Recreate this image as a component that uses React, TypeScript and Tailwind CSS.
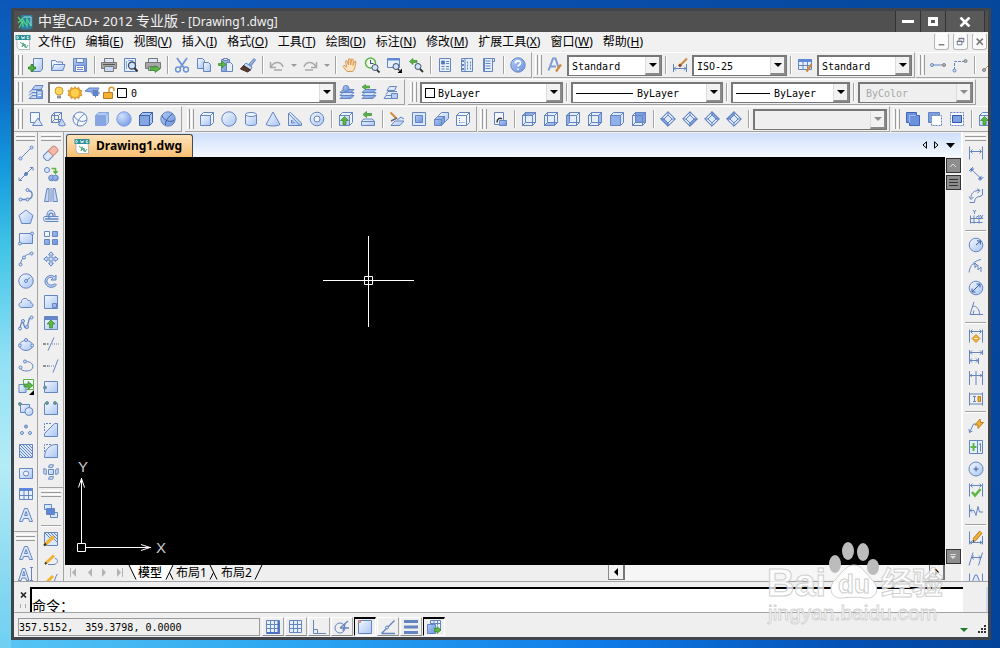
import type { ReactNode } from "react"

const FACE = "url(#face)"
const DEEP = "url(#deep)"
const GREEN = "#5fb446"
const GOLD = "#f2b233"

const dot = (x: number, y: number, fill = "#cfe0fa", r = 1.5) => <circle cx={x} cy={y} r={r} fill={fill} />

const cube = (front: string, side: string) => (
  <>
    <path d="M1.5 4.5l3-3h10v10l-3 3z" fill={side} />
    <path d="M1.5 4.5h10v10h-10z" fill={front} />
    <path d="M11.5 4.5l3-3" />
  </>
)

const viewCube = (face: ReactNode) => (
  <>
    <path d="M1.5 4.5l3-3h10v10l-3 3h-10z" fill="#e4eefc" />
    {face}
    <path d="M1.5 4.5h10v10h-10zM11.5 4.5l3-3M4.5 1.5v10h10M4.5 11.5l-3 3" />
  </>
)

const diamond = (shade: ReactNode) => (
  <>
    <path d="M8 .8L15.2 8 8 15.2.8 8z" fill="#dce9fc" />
    {shade}
    <path d="M8 .8L15.2 8 8 15.2.8 8zM8 4l4 4-4 4-4-4zM8 .8V4M15.2 8H12M8 15.2V12M.8 8H4" />
  </>
)

const layers = (
  <>
    <path d="M1 14.5l3-3h11l-3 3z" fill={DEEP} />
    <path d="M1 11.5l3-3h11l-3 3z" fill="#cfe0fa" />
    <path d="M1 8.5l3-3h11l-3 3z" fill={DEEP} />
  </>
)

const letterA = <path d="M1.5 14.5L6.5 1.5h3l5 13h-3l-1-3h-5l-1 3zM6.5 8.5h3L8 4.5z" fill="#dbe8fb" />

const dimEnds = <path d="M1.5 1.5v13M14.5 1.5v13" />
const arrowsH = (y: number) => <path d={`M2.5 ${y}h11M4.5 ${y - 2}l-2 2 2 2M11.5 ${y - 2}l2 2-2 2`} />

const icons: Record<string, ReactNode> = {
  new: (
    <>
      <path d="M5.5 1.5h9v10.5l-2 2.5h-7z" fill={FACE} />
      <path d="M3 7.5h2v2.5h2.5v2H5v2.5H3V12H.5v-2H3z" fill={GREEN} stroke="#2f8a2a" />
    </>
  ),
  open: (
    <>
      <path d="M1.5 13.5v-10h4L7 5h5.5v3" fill="#eaf2fd" />
      <path d="M1.5 13.5l2.5-6h11l-2 6z" fill={FACE} />
    </>
  ),
  save: (
    <>
      <path d="M1.5 1.5h13v13h-13z" fill={DEEP} />
      <path d="M4.5 1.5h7v4h-7z" fill="#eef4fd" />
      <path d="M3.5 8.5h9v6h-9z" fill="#fff" />
      <path d="M5 10.5h6M5 12.5h6" />
    </>
  ),
  print: (
    <g stroke="#777">
      <path d="M3.5 1.5h9v4h-9z" fill="#dbe8fb" />
      <path d="M.5 5.5h15v6H.5z" fill="#a8a8a8" />
      <path d="M3.5 9.5h9v5h-9z" fill="#c6daf8" />
      <path d="M2 7.5h12" stroke="#555" />
    </g>
  ),
  preview: (
    <>
      <path d="M1.5 1.5h11v13h-11z" fill="#e6effc" />
      <path d="M3.5 4v8M5 3.5h5" stroke="#88a4d8" />
      <circle cx="9" cy="8.5" r="3.5" fill="#cfe2fb" stroke="#3d4c66" strokeWidth="1.3" />
      <path d="M11.5 11l3 3.5" stroke="#333" strokeWidth="2" />
    </>
  ),
  publish: (
    <g stroke="#777">
      <path d="M3.5 1.5h9v4h-9z" fill="#dbe8fb" />
      <path d="M.5 5.5h15v6H.5z" fill="#a8a8a8" />
      <path d="M3.5 9.5h9v4h-9z" fill="#c6daf8" />
      <path d="M5 10.5h5v-2l5 3.5-5 3.5v-2H5z" fill={GREEN} stroke="#2f8a2a" strokeWidth=".7" />
    </g>
  ),
  cut: (
    <g stroke="#6f93d6">
      <path d="M3 1l7 10M13 1L6 11" strokeWidth="1.8" />
      <circle cx="4" cy="12.5" r="2.4" strokeWidth="1.5" />
      <circle cx="12" cy="12.5" r="2.4" strokeWidth="1.5" />
    </g>
  ),
  copy: (
    <>
      <path d="M1.5 1.5h5l2 2v8h-7z" fill={FACE} />
      <path d="M7.5 5.5h5l2 2v7h-7z" fill={FACE} />
    </>
  ),
  paste: (
    <>
      <path d="M3.5 2.5h8v12h-8z" fill={DEEP} />
      <path d="M5.5 1.5h4v2h-4z" fill="#eee" />
      <path d="M8.5 5.5h4l2 2v7h-6z" fill="#e6effc" />
      <path d="M.5 6.5H4V4l4 3.5L4 11V8.500H.5z" fill={GREEN} stroke="#2f8a2a" strokeWidth=".7" />
    </>
  ),
  match: (
    <>
      <path d="M9 7l5-5.5L15.5 3 11 9z" fill={DEEP} />
      <path d="M6 6l6 4-1.500 3-7-4.500z" fill="#c9d6ee" />
      <path d="M3.500 8.500l7 4.500-3 2L.5 12z" fill="#5b3a2c" stroke="#3c2a26" />
    </>
  ),
  undo: <path d="M1.5 5v5.500H7M2 10c3-6 10-6 12 0M5 13h8" stroke="#a9a9a9" strokeWidth="1.5" />,
  redo: <path d="M14.5 5v5.500H9M14 10c-3-6-10-6-12 0M3 13h8" stroke="#a9a9a9" strokeWidth="1.5" />,
  pan: (
    <path
      d="M5 14.500L1 9.500l1-1.300 2.500 1.800L3.500 4l1.300-.5L6.500 8V2l1.500-.5L8.700 8l1-6 1.500.3-.2 6.200 1.800-4.500 1.200.6-1.200 6.400-2 3.500z"
      fill="#fbe3c2"
      stroke="#d99a58"
    />
  ),
  zoomRealtime: (
    <>
      <circle cx="6.500" cy="6" r="5" fill="#f0faf0" stroke={GREEN} strokeWidth="1.5" />
      <path d="M6.500 3v3.500h3" stroke="#3d4c66" />
      <circle cx="11" cy="10.500" r="3" fill="#cfe2fb" stroke="#44536e" />
      <path d="M13 13l2.500 2.500" stroke="#333" strokeWidth="1.800" />
    </>
  ),
  zoomWindow: (
    <>
      <path d="M1.5 1.5h12v9h-12z" fill="#e6effc" />
      <path d="M1.5 2.5h12" strokeWidth="2" stroke="#5f88d8" />
      <circle cx="10" cy="9.5" r="3" fill="#cfe2fb" stroke="#44536e" />
      <path d="M12 12l1.5 1.5" stroke="#333" strokeWidth="1.5" />
      <path d="M16 11.5V16h-4.5z" fill="#000" stroke="none" />
    </>
  ),
  zoomPrev: (
    <>
      <path d="M5 1.5L1.5 4.500 5 7.500v-2h4v-2H5z" fill={GREEN} stroke="#2f8a2a" strokeWidth=".7" />
      <circle cx="10" cy="9.5" r="3" fill="#cfe2fb" stroke="#44536e" />
      <path d="M12 12l3 3" stroke="#333" strokeWidth="1.8" />
    </>
  ),
  properties: (
    <>
      <path d="M2.5 1.5h11v13h-11z" fill="#e6effc" />
      <path d="M4.5 4h3v3h-3z" fill="#4a73c4" />
      <path d="M9 4.5h3M9 6.5h3M4.5 9.5h3M9 9.5h3M4.5 12h3M9 12h3" />
    </>
  ),
  designCenter: (
    <>
      <path d="M2.5 1.5h11v13h-11z" fill="#e6effc" />
      <path d="M6 1.5v13" />
      <path d="M4 3v2M4 7v2M4 11v2M8 5.5h1M11 5.5h1M8 8.5h1M11 8.5h1M8 11.5h1M11 11.5h1" strokeWidth="2" />
    </>
  ),
  toolPalette: (
    <>
      <path d="M2.5 1.5h9v13h-9z" fill="#e6effc" />
      <path d="M11.5 1.5h2v3h-2zM4.5 4h5M4.5 6.5h5M4.5 9h5M4.5 11.5h5" />
      <path d="M3 2v12" strokeWidth="2" />
    </>
  ),
  help: (
    <>
      <circle cx="8" cy="8" r="7.2" fill={DEEP} />
      <path d="M5.5 6.5c0-3.5 5-3.5 5-.5 0 2-2.5 2-2.5 3.5M8 11.5V13" stroke="#fff" strokeWidth="1.7" />
    </>
  ),
  textStyle: (
    <>
      <path d="M1.5 13.5L6 1.5h2.5l3 9M4 9.5h5" strokeWidth="2" stroke="#7d9bd4" />
      <path d="M9 14.5l5-7" stroke="#d08a3c" strokeWidth="2.2" />
    </>
  ),
  dimStyle: (
    <>
      <path d="M1.5 7v8M14.5 7v8M2 11.5h12M4 9.5l-2 2 2 2M12 9.5l2 2-2 2" />
      <path d="M8 8.5l7-7" stroke="#d08a3c" strokeWidth="2.2" />
      <path d="M7 9.5l2-2" stroke="#8a4a30" strokeWidth="3" />
    </>
  ),
  tableStyle: (
    <>
      <path d="M1.5 2.5h13v10h-13z" fill="#e6effc" />
      <path d="M1.5 3.5h13" strokeWidth="3" stroke="#5f88d8" />
      <path d="M1.5 8.5h13M6 4v8.5M10.5 4v8.5" />
      <path d="M9.5 14.5l5-7" stroke="#d08a3c" strokeWidth="2.2" />
    </>
  ),
  dimChainA: (
    <>
      <path d="M2 8h12" />
      {dot(2, 8)}
      {dot(14, 8, GOLD)}
    </>
  ),
  dimChainB: (
    <>
      <path d="M2.5 13V4.5H13" strokeDasharray="3 1" />
      {dot(2.5, 13.5)}
      {dot(13.5, 4, GOLD)}
    </>
  ),
  dimChainC: (
    <>
      <path d="M3 13l10-10" stroke="#d08a3c" />
      {dot(3, 13, GOLD)}
    </>
  ),
  layerManager: (
    <>
      <path d="M1 14.5l3-3h10M1 11.500l3-3h10M1 8.500l3-3h10M4 5.500l3-4h8l-2 4z" fill="#b7cdf3" />
      <path d="M1 14.500h8" />
      <path d="M8.5 6.5h6v8h-6z" fill={DEEP} />
      <path d="M10 9h3M10 11.5h3" stroke="#fff" />
    </>
  ),
  layerCurrent: (
    <>
      {layers}
      <circle cx="7" cy="4.5" r="3" fill={DEEP} />
    </>
  ),
  layerPrev: (
    <>
      {layers}
      <path d="M4.5.5L1 3l3.500 2.500V4h4V2h-4z" fill={GREEN} stroke="#2f8a2a" strokeWidth=".6" />
    </>
  ),
  layerState: (
    <>
      <path d="M1 14.5l2-3h11v3zM3 10.5l2-3h9M4 6.5l2.500-4h7l-2 4z" fill="#dbe8fb" />
      <path d="M8.5 9.5h6v5h-6z" fill="#b7cdf3" />
    </>
  ),
  wire2d: (
    <>
      <path d="M2.5 1.5h9v10h-9z" fill="#f4f8fe" />
      <path d="M10 7l4.500 7.500h-10z" fill="#dbe8fb" />
    </>
  ),
  wire3d: (
    <>
      <path d="M1.5 4.5h7v7h-7zM4.5 1.5h7v7h-7zM1.5 4.5l3-3M8.5 4.5l3-3M1.5 11.5l3-3M8.5 11.5l3-3" />
      <path d="M11.5 7.5l4 6.5c-2 1.200-5 1.200-7 0z" fill="#c3d7f7" />
    </>
  ),
  hidden: (
    <>
      <circle cx="8" cy="8" r="7" fill="#f4f8fe" />
      <path d="M2 4.5C4 10 11 12 14.5 9M12.5 3C9 5 5 10 5.5 14" />
    </>
  ),
  flatShade: <g stroke="#86a6e2">{cube("#86a6e2", "#b5cbf4")}</g>,
  gouraud: <circle cx="8" cy="8" r="7.2" fill="url(#ball)" stroke="#7d9fe0" />,
  flatEdge: <g stroke="#3f62ad">{cube("#86a6e2", "#a9c3f0")}</g>,
  gouraudEdge: (
    <>
      <circle cx="8" cy="8" r="7.200" fill={DEEP} />
      <path d="M2 4.5C4 10 11 12 14.5 9M12.5 3C9 5 5 10 5.5 14" stroke="#3d5c9c" />
    </>
  ),
  box: cube(FACE, "#eef4fd"),
  sphere: <circle cx="8" cy="8" r="7.2" fill={FACE} />,
  cylinder: (
    <>
      <path d="M2.5 3.5V13c1 2 10 2 11 0V3.5" fill={FACE} />
      <ellipse cx="8" cy="3.5" rx="5.5" ry="2" fill="#eef4fd" />
    </>
  ),
  cone: <path d="M8 1l7 12.500c-3 2-11 2-14 0z" fill={FACE} />,
  wedge: (
    <>
      <path d="M1.5 14V2.500l2-1L14.500 12v2.500l-13 0z" fill={FACE} />
      <path d="M1.5 2.500L13 14.500M4.500 9v3h3z" fill="#eef4fd" />
    </>
  ),
  torus: (
    <>
      <circle cx="8" cy="8" r="6.8" fill={FACE} />
      <circle cx="8" cy="8" r="3" fill="#f4f4f4" />
    </>
  ),
  extrude: (
    <>
      {cube(FACE, "#eef4fd")}
      <path d="M6.5 5.5l4 4H8v4H5v-4H2.500z" fill={GREEN} stroke="#2f8a2a" strokeWidth=".7" />
    </>
  ),
  revolve: (
    <>
      <path d="M1.500 10l2.500-2h8l2.500 2v4.500h-13z" fill={FACE} />
      <path d="M1.500 10.500h13" />
      <path d="M6.500.5L3 3.500l3.500 3v-2h5v-2h-5z" fill={GREEN} stroke="#2f8a2a" strokeWidth=".7" />
    </>
  ),
  slice: (
    <>
      <path d="M2 14.500L6 10h9l-4 4.500zM8 9l4-3 3 2" fill={FACE} />
      <path d="M1.500 1.500l6 6" stroke="#d08a3c" strokeWidth="2" />
      <path d="M2 10l6-3" stroke="#667" strokeWidth="1.500" />
    </>
  ),
  section: (
    <>
      <path d="M1.5 1.5h13v13h-13z" fill="#dbe8fb" />
      <path d="M4.5 4.5h7v7h-7z" fill={DEEP} />
    </>
  ),
  interfere: (
    <>
      <path d="M5.5 4.5l3-3h7v6l-3 3h-7z" fill={FACE} />
      <path d="M1.5 8.5l3-3h7v6l-3 3h-7z" fill={DEEP} />
      <path d="M1.5 8.5h7v6M8.500 8.500l3-3" />
    </>
  ),
  setup: (
    <>
      <path d="M1.5 4.5l3-3h10v10l-3 3h-10z" fill="#f4f8fe" />
      <path d="M1.5 4.5h10v10M11.5 4.5l3-3" />
      <path d="M4.5 7v5M4.5 11.5h5" strokeDasharray="1 1" />
    </>
  ),
  namedView: (
    <>
      <path d="M2.5 1.5h9v12h-9z" fill="#f4f8fe" />
      <path d="M7.5 9.5h7v5h-7z" fill={DEEP} />
      <path d="M5 11.5c0-4 3-5 5-3.5" stroke="#333" strokeWidth="1.5" />
    </>
  ),
  viewTop: viewCube(<path d="M1.5 4.5l3-3h10l-3 3z" fill="#8fade6" />),
  viewBottom: viewCube(<path d="M1.5 14.5l3-3h10l-3 3z" fill="#9db9ec" />),
  viewLeft: viewCube(<path d="M1.5 4.5l3-3v10l-3 3z" fill="#8fade6" />),
  viewRight: viewCube(<path d="M11.5 4.5l3-3v10l-3 3z" fill="#9db9ec" />),
  viewFront: cube("#8fb0ea", "#dbe8fb"),
  viewBack: viewCube(<path d="M4.5 1.5h10v10h-10z" fill="#7f9fe0" />),
  isoSW: diamond(<path d="M.8 8H4l4 4v3.2z" fill="#7fa0e0" />),
  isoSE: diamond(<path d="M15.2 8H12l-4 4v3.2z" fill="#7fa0e0" />),
  isoNE: diamond(<path d="M15.2 8H12L8 4V.8z" fill="#7fa0e0" />),
  isoNW: diamond(<path d="M.8 8H4l4-4V.8z" fill="#7fa0e0" />),
  union: (
    <g stroke="#3d66bb">
      <path d="M1.5 1.5h10v3h3v10h-10v-3h-3z" fill="#6c92de" />
      <path d="M4.5 11.5v-7h7" strokeDasharray="1 1" stroke="#cfe0fa" />
    </g>
  ),
  subtract: (
    <>
      <path d="M1.5 1.5h11v3h-8v7h-3z" fill="#7fa0e0" />
      <path d="M4.5 4.5h10v10h-10z" strokeDasharray="2 1" fill="#fff" />
    </>
  ),
  intersect: (
    <>
      <path d="M1.5 1.5h13v13h-13z" strokeDasharray="2 1" fill="#fff" />
      <path d="M3.5 4.5h9v7h-9z" fill="#7fa0e0" stroke="#2f58b0" />
    </>
  ),
  // draw
  line: (
    <>
      <path d="M2.5 13.5l11-11" />
      {dot(2.5, 13.5)}
      {dot(13.5, 2.5)}
    </>
  ),
  xline: (
    <>
      <path d="M1.5 14.5l13-13M1 11.5v3h3M12 1.5h3v3" />
      {dot(8, 8, "#5a80cc")}
    </>
  ),
  polyline: (
    <>
      <path d="M2.5 12.5h7c6-1 6-8 1-9" strokeWidth="1.4" />
      {dot(2.5, 12.5)}
      {dot(9.5, 12.5)}
      {dot(9.5, 3)}
    </>
  ),
  polygon: <path d="M8 1l7 5.500-2.700 8H3.700L1 6.500z" fill={FACE} />,
  rectangle: (
    <>
      <path d="M1.5 3.5h13v10h-13z" fill={FACE} />
      {dot(2, 13.5)}
      {dot(14, 3.5)}
    </>
  ),
  arc: (
    <>
      <path d="M2.5 13.5C3 7 8 3 13.5 2.5" />
      {dot(2.5, 13.5)}
      {dot(6, 6.5)}
      {dot(13.5, 2.5)}
    </>
  ),
  circle: (
    <>
      <circle cx="8" cy="8" r="7.2" fill={FACE} />
      <path d="M8 8l4-3.5" />
      {dot(8, 8)}
    </>
  ),
  cloud: <path d="M4 13.5c-4 0-4-5-.5-5C3 4 9 3 10 6.500c3-.5 3 1.500 2.500 2.500 3.500 0 3 4.500 0 4.500z" fill={FACE} />,
  spline: (
    <>
      <path d="M2 14c1-8 3-8 4-4s3 4 4-1 1-6 4-7" strokeWidth="1.3" />
      {dot(2, 13.5)}
      {dot(5, 6)}
      {dot(9, 12)}
      {dot(13.5, 2.5)}
    </>
  ),
  ellipse: (
    <>
      <ellipse cx="8" cy="8.5" rx="6.5" ry="5" fill={FACE} />
      {dot(8, 3)}
      {dot(1.8, 8.5)}
      {dot(14.2, 8.5)}
    </>
  ),
  ellipseArc: (
    <>
      <path d="M8 3.5c9 0 9 9.5 1 9.500-4 0-6-1-6.500-2.500" />
      {dot(7, 3.5)}
      {dot(2.5, 9.5)}
    </>
  ),
  insert: (
    <>
      <path d="M5.5.5h10v10h-10z" fill="#f4f8fe" stroke={GREEN} />
      <path d="M1 5.5h7v8H1z" fill={FACE} />
      <path d="M6 5h4V2.500l5 4-5 4V8H6z" fill={GREEN} stroke="#2f8a2a" strokeWidth=".7" />
      <path d="M16 11v5h-5z" fill="#000" stroke="none" />
    </>
  ),
  block: (
    <>
      <path d="M2.5 3.5h9v8h-9z" fill={FACE} />
      <circle cx="11" cy="10.5" r="4" fill={FACE} />
      {dot(2, 3, GREEN)}
    </>
  ),
  point: (
    <>
      {dot(8, 4.5, "#8fb0ea")}
      {dot(4, 11)}
      {dot(12, 11)}
    </>
  ),
  hatch: (
    <>
      <path d="M1.5 1.5h13v13h-13z" fill="#dbe8fb" />
      <path d="M2 2l12 12M2 5l9 9M2 8l6 6M2 11l3 3M5 2l9 9M8 2l6 6M11 2l3 3" />
    </>
  ),
  region: (
    <>
      <path d="M1.5 3.5h13v10h-13z" fill={FACE} />
      <circle cx="8" cy="8.5" r="2.5" fill="#f4f8fe" />
    </>
  ),
  table: (
    <>
      <path d="M1.5 2.5h13v11h-13z" fill="#e6effc" />
      <path d="M1.5 3.5h13" strokeWidth="3" stroke="#5f88d8" />
      <path d="M1.5 9.5h13M6 5v8.5M10.5 5v8.5" />
    </>
  ),
  mtext: letterA,
  text: letterA,
  textEdit: (
    <>
      <path d="M.5 14.5l4-12H7l4 12H8.500l-.8-2.500H4l-1 2.500zM4.500 9.500H7l-1.200-4z" fill="#dbe8fb" />
      <path d="M12 1.5h3M12 14.5h3M13.5 1.5v13" />
    </>
  ),
  // modify
  erase: (
    <g transform="rotate(-45 8 8)">
      <rect x="-.5" y="4.5" width="9" height="7" rx="2" fill="#dbe8fb" />
      <path d="M7.5 4.5h6a2 2 0 0 1 2 2v3a2 2 0 0 1-2 2h-6z" fill="#f6b9a8" stroke="#c98a7d" />
    </g>
  ),
  copyObj: (
    <>
      <circle cx="4" cy="4" r="2.5" fill="#dbe8fb" />
      <circle cx="8.5" cy="12" r="2.8" fill={DEEP} />
      <circle cx="12.5" cy="12" r="2.8" fill={DEEP} />
      <path d="M8.5 2.5h4V7M10.5 5l2 2.500 2-2.500" stroke={GREEN} strokeWidth="1.5" />
    </>
  ),
  mirror: (
    <>
      <path d="M4 1.5h2v13H1.5zM12 1.5h-2v13h4.500z" fill="#c3d7f7" />
      <path d="M8 1v14" />
    </>
  ),
  offset: (
    <>
      <path d="M4 7.500V5c1-5 7-5 8 0v2.500M15.500 7.500h-14c-2 1-1 5 1 5h13" fill="#dbe8fb" />
      <path d="M6 10V6c0-2.500 4-2.500 4 0v1.500M15.500 10H2" strokeWidth="1.400" />
    </>
  ),
  array: (
    <>
      <path d="M1.5 1.500h5v5h-5z" fill="#f4f8fe" />
      <path d="M9.500 1.500h5v5h-5zM1.500 9.500h5v5h-5zM9.500 9.500h5v5h-5z" fill={DEEP} />
    </>
  ),
  move: (
    <path
      d="M8 .8l2.500 3H9v3.200h3.200V5.500l3 2.500-3 2.500V9H9v3.200h1.500L8 15.200l-2.500-3H7V9H3.800v1.500L.8 8l3-2.500V7H7V3.800H5.500z"
      fill="#cfe0fa"
    />
  ),
  rotate: (
    <path d="M13 2v5H8l1.800-1.800C6 3 3.500 6 4 9c1 3.500 6 4 8 1.500l1.500 1.500c-4 4.500-11 2-11.500-3C1.500 3.500 8 .5 11.300 3.700z" fill="#b9cff5" />
  ),
  scale: (
    <>
      <path d="M1.5 1.5h13v13h-13z" fill={FACE} />
      <path d="M9.5 9.5h4v4h-4z" fill="#9db9ec" />
    </>
  ),
  stretch: (
    <>
      <path d="M1.5 1.5h13v13h-13z" fill={FACE} />
      <path d="M1.5 2.5h13v2h-13z" fill="#5f88d8" />
      <path d="M8 5l4 4H9.500v4h-3V9H4z" fill={GREEN} stroke="#2f8a2a" strokeWidth=".7" />
    </>
  ),
  trim: (
    <>
      <path d="M5 14.5l6-13" />
      <path d="M0 8h5.5" stroke="#333" strokeDasharray="3 1" />
      <path d="M9 8h7" strokeDasharray="1 1" />
    </>
  ),
  extend: (
    <>
      <path d="M10 14.5l5-13" />
      <path d="M0 8h5.5" stroke="#333" strokeDasharray="3 1" />
      <path d="M6 8h5" strokeDasharray="1 1" />
    </>
  ),
  breakPoint: (
    <>
      <path d="M1.5 2.5h13v11h-13z" fill={FACE} />
      {dot(2, 8.5, GREEN)}
    </>
  ),
  breakTwo: (
    <>
      <path d="M4 3.5H1.5v11h13v-11H12" fill={FACE} />
      {dot(4, 3, GREEN)}
      {dot(12, 3, GREEN)}
    </>
  ),
  chamfer: (
    <>
      <path d="M1.5 11.5l10-10h3v13h-13z" fill={FACE} />
      <path d="M1.5 9V1.5H9" strokeDasharray="2 1" />
    </>
  ),
  fillet: (
    <>
      <path d="M1.5 14.5c0-8 5-12 10-13h3v13z" fill={FACE} />
      <path d="M1.5 9V1.5H9" strokeDasharray="2 1" />
    </>
  ),
  explode: (
    <>
      <path d="M5.5 5.5h5v5h-5z" fill={FACE} />
      <path d="M6.5.8h4l-1 2.500h-4zM6.500 12.700h4l-1 2.500h-4zM.8 4.500l2.500 1v5l-2.500-1zM15.200 4.500l-2.500 1v5l2.500-1z" fill="#dbe8fb" />
    </>
  ),
  order: (
    <>
      <path d="M1.5 1.5h7v5h-7z" fill="#dbe8fb" />
      <path d="M7.5 9.5h7v5h-7z" fill="#dbe8fb" />
      <path d="M3.5 5.5h8v6h-8z" fill="#5d86d8" />
    </>
  ),
  hatchEdit: (
    <>
      <path d="M1.5 1.5h13v13h-13z" fill="#dbe8fb" />
      <path d="M5 2l9 9M8 2l6 6M11 2l3 3M2 2l5 5" />
      <path d="M2 13.5l9-8" stroke={GOLD} strokeWidth="3.5" />
      <path d="M1 14.5l2-2" stroke="#333" strokeWidth="2" />
    </>
  ),
  pedit: (
    <>
      <path d="M5 13.5h6c5-1 4-6 1-6" />
      <path d="M3 12l8-7.500" stroke={GOLD} strokeWidth="3" />
      <path d="M2 13l1.500-1.500" stroke="#333" strokeWidth="2" />
    </>
  ),
  splinedit: (
    <>
      <path d="M9 14c3-2 3-9 5.500-11" />
      <path d="M3 12l7-7" stroke={GOLD} strokeWidth="3" />
      <path d="M2 13l1.500-1.500" stroke="#333" strokeWidth="2" />
    </>
  ),
  // dimension
  dimLinear: (
    <>
      {dimEnds}
      {arrowsH(6.5)}
    </>
  ),
  dimAligned: (
    <>
      <path d="M3.5 3.500l9.500 9M1 5l4-4M11.500 15l4-4" />
      <path d="M2.500 2.500h4l-4 4zM13.500 13.500h-4l4-4z" fill="#5a80cc" stroke="none" />
    </>
  ),
  dimArc: <path d="M3 10c0-5 3-7.500 8-7.500M1 8.500l2 3 2.500-2.500M9 .8l3 1.700-2.500 2.700M1.500 14.500h5c0-4 2-6 6-6M14.500 1v6l-3 1.500" />,
  dimOrdinate: <path d="M2.500 6.500v8M2.500 9.500h12M2.500 13.500h12M6 6.500v8M11 6.500v8M5 1l1.500 2L8 1M6.500 3v2M12 6l3 4M15 6l-3 4M8 8.500l3-2" />,
  dimRadius: (
    <>
      <circle cx="8" cy="8" r="6.8" fill={FACE} />
      <path d="M8 8l4.500-4M9 3.800l3.500.2-.2 3.500" stroke="#3d5c9c" />
    </>
  ),
  dimJogged: <path d="M1 14.500C2 7 6 3 13 1.500M7 5v5M5.500 7L7 5l2 2M7 9l3-2v5l3-3v5" />,
  dimDiameter: (
    <>
      <circle cx="8" cy="8" r="6.8" fill={FACE} />
      <path d="M4 12l8-8M8.500 4H12v3.500M4 8.500V12h3.500" stroke="#3d5c9c" />
    </>
  ),
  dimAngular: <path d="M6 .8L2 13.500h13M5 5c4 0 6.500 4 6.500 8M5 13.500l1-4" />,
  dimQuick: (
    <>
      {dimEnds}
      {arrowsH(3.5)}
      <path d="M8 6.500l4 4-4 4-4-4z" fill={GOLD} stroke="#d08a3c" />
      <path d="M6.500 10.500h3" stroke="#fff" />
    </>
  ),
  dimBaseline: <path d="M1.500 1v14M14.500 1v5M10.500 9v6M2 3.500h12M4 1.500l-2 2 2 2M12 1.500l2 2-2 2M2 11.500h8M4 9.500l-2 2 2 2M8 9.500l2 2-2 2" />,
  dimContinue: <path d="M1.500 1v14M8 1v14M14.500 1v14M2 5.500h12M4 4.500l-2 1 2 1M12 4.500l2 1-2 1" />,
  dimSpace: (
    <>
      {dimEnds}
      <path d="M2 3h12M2 13h12M5 5.500h3M6.500 5.500v5M5 10.500h3" />
      <path d="M10 5.500h2.500v5H10z" fill={GOLD} stroke="#c07a1e" />
    </>
  ),
  leader: (
    <>
      <path d="M1.500 14.500L5.500 6H8M1 11l.5 3.500L4.500 13" />
      <path d="M7 7l5-6 .5 3.500h3L10 10.500V7z" fill={GOLD} stroke="#c07a1e" />
    </>
  ),
  tolerance: (
    <>
      <path d="M1.5 1.5h13v13h-13zM9.500 1.500v13" fill="#e6effc" />
      <path d="M5.5 4v8M2.500 8h6" stroke={GREEN} strokeWidth="2" />
      <path d="M11 5.500l1.500-1v8" />
    </>
  ),
  centerMark: (
    <>
      <circle cx="8" cy="8" r="7" fill={FACE} />
      <path d="M8 5.5v5M5.5 8h5" stroke="#3d5c9c" />
    </>
  ),
  inspect: (
    <>
      {dimEnds}
      {arrowsH(3.5)}
      <path d="M4 10l3 3.500L12.500 7" stroke={GREEN} strokeWidth="2.5" />
    </>
  ),
  joggedLinear: <path d="M1.500 1.500v13M2 7.500h4l2 5 2-9 1.500 5.500H15M4 5.500l-2 2 2 2" />,
  dimEdit: (
    <>
      <path d="M1.500 1.500v13M14.500 6v8.500M2 12.500h12M4 11l-2 1.500L4 14M12 11l2 1.500-2 1.500" />
      <path d="M6 10l7-8" stroke="#a87a2a" strokeWidth="4" />
      <path d="M6 10l7-8" stroke={GOLD} strokeWidth="2.600" />
      <path d="M5 11.500l1-1" stroke="#333" strokeWidth="2" />
    </>
  ),
  dimOblique: <path d="M1 14.500L5 1.500M10.500 14.500l4-13M4 6.500h9M5.500 4.500l-1.500 2 1.500 2M11 4.500l2 2-2 2" />,
  dimTextEdit: (
    <>
      {dimEnds}
      <path d="M3.500 12l3.500-9h2l3.500 9h-2l-.8-2H6.300l-.8 2z" fill="#dbe8fb" />
    </>
  ),
  // status bar
  snap: (
    <>
      <path d="M1.5 1.5h13v13h-13z" fill="#e6effc" />
      <path d="M1.5 5.5h13M1.5 9.5h13M5.5 1.5v13M9.5 1.5v13" />
      <path d="M13.5 2v12H2" strokeWidth="2" stroke="#4a70c0" />
    </>
  ),
  grid: <path d="M1.5 1.5h12v12h-12zM1.5 5.5h12M1.5 9.5h12M5.5 1.5v12M9.5 1.5v12" fill="#e6effc" />,
  ortho: <path d="M2.5 1v13.5H15M2.5 10.5h4v4" />,
  polar: (
    <>
      <circle cx="6" cy="9" r="5" />
      <path d="M6 9l8-7M6 9h9M11 5l-2 7" strokeWidth="1.3" />
    </>
  ),
  osnap: (
    <>
      <path d="M1.5 1.5h13v13h-13z" fill={FACE} />
      <path d="M1.500 1.500h2v2h-2z" fill="#e9a79c" stroke="#c98a7d" />
    </>
  ),
  otrack: (
    <>
      <path d="M1.5 14.5l13-13M1.5 14.5H15" strokeWidth="1.4" />
      {dot(7, 8.5)}
    </>
  ),
  lineweight: <path d="M1 2.500h14M1 8h14M1 13.500h14" strokeWidth="3" />,
  dynamic: (
    <>
      <path d="M4.5 1.5h10v10h-10zM4.5 4.5h10M8 1.5v5M11.5 1.5v5" fill="#e6effc" />
      <path d="M1.500 5.500h8v9h-8z" fill={DEEP} />
      <path d="M8.500 9.500H11V7.500l4 3.500-4 3.500v-2H8.500z" fill={GREEN} stroke="#2f8a2a" strokeWidth=".7" />
    </>
  ),
}

function Icon({ name }: { name: string }) {
  return (
    <svg viewBox="0 0 16 16" className="size-4 shrink-0" fill="none" stroke="#6585c0" strokeWidth="1" aria-hidden="true">
      {icons[name]}
    </svg>
  )
}

function ToolButton({ name }: { name: string }) {
  return (
    <button type="button" aria-label={name} className="flex w-[22px] shrink-0 items-center justify-center hover:bg-[#dfe8f6]">
      <Icon name={name} />
    </button>
  )
}

function Tools({ names }: { names: string }) {
  return names.split(" ").map((name) => <ToolButton key={name} name={name} />)
}

function Sep() {
  return (
    <div className="flex w-[7px] shrink-0 justify-center py-[3px]">
      <div className="w-[2px] border-r border-l border-r-white border-l-[#a3a3a3]" />
    </div>
  )
}

function Grip() {
  return (
    <div className="flex w-[11px] shrink-0 gap-px py-[2px] pl-[2px]">
      <div className="w-[3px] border-r border-l border-r-[#9a9a9a] border-l-white" />
      <div className="w-[3px] border-r border-l border-r-[#9a9a9a] border-l-white" />
    </div>
  )
}

function Bar({ children, className = "mr-px" }: { children: ReactNode; className?: string }) {
  return (
    <div className={`flex shrink-0 border-t border-r border-b border-t-white border-r-[#a3a3a3] border-b-[#a3a3a3] pr-[2px] ${className}`}>
      <Grip />
      {children}
    </div>
  )
}

type ComboProps = { label: string; value: string; width: string; pad?: string; disabled?: boolean; children?: ReactNode }

function Combo({ label, value, width, pad = "pl-[3px]", disabled, children }: ComboProps) {
  return (
    <div
      className={`relative my-[2px] ml-px h-[21px] shrink-0 border-t-2 border-r border-b border-l-2 border-[#777] ${width} ${
        disabled ? "bg-[#efefef]" : "bg-white"
      }`}
    >
      <select
        aria-label={label}
        disabled={disabled}
        className={`block size-full appearance-none bg-transparent font-['DejaVu_Sans_Mono',monospace] text-[10px] outline-none disabled:text-[#a8a8a8] ${pad}`}
      >
        <option>{value}</option>
      </select>
      <div className="pointer-events-none absolute inset-y-0 left-0 flex items-center">{children}</div>
      <div className="pointer-events-none absolute inset-y-0 right-0 flex w-4 items-center justify-center border-r-2 border-b-2 border-l border-r-[#8a8a8a] border-b-[#8a8a8a] border-l-[#ddd] bg-[#f2f2f2]">
        <svg viewBox="0 0 8 4" className="h-1 w-2" fill={disabled ? "#8d8d8d" : "#000"}>
          <path d="M0 0h8L4 4z" />
        </svg>
      </div>
    </div>
  )
}

function HGrip() {
  return (
    <div className="flex h-[10px] shrink-0 flex-col gap-px px-[2px] pt-[2px]">
      <div className="h-[3px] border-t border-b border-t-white border-b-[#9a9a9a]" />
      <div className="h-[3px] border-t border-b border-t-white border-b-[#9a9a9a]" />
    </div>
  )
}

function HSep() {
  return <div className="mx-[2px] my-[2px] h-[2px] shrink-0 border-t border-b border-t-[#a3a3a3] border-b-white" />
}

function Stack({ names, height }: { names: string; height: string }) {
  return (
    <div className={`flex shrink-0 flex-col items-center ${height}`}>
      {names.split(" ").map((name) => (
        <button key={name} type="button" aria-label={name} className="flex w-[22px] flex-1 items-center justify-center">
          <Icon name={name} />
        </button>
      ))}
    </div>
  )
}

function DwgIcon() {
  return (
    <svg viewBox="0 0 16 16" className="size-4 shrink-0" aria-hidden="true">
      <path d="M2 5h11l1.5 2v8.500H4L2 13z" fill="#fff" stroke="#8a9aa0" strokeWidth=".6" />
      <path d="M.5 1h15v5H.5z" fill="#2a8f96" />
      <path d="M2 2.300v2.500c2 0 2-2.500 0-2.500M6.500 2.300l.8 2.500.8-1.800.8 1.800.8-2.500M13.800 2.500h-1.600v2.200h1.600v-1" fill="none" stroke="#fff" strokeWidth=".8" />
      <path d="M5 8.500l3 1.500-1 3 3-3 1 4 2-3M8 8.500l2 5" fill="none" stroke="#3f9f72" strokeWidth=".9" />
    </svg>
  )
}

const menus = [
  ["文件", "F"],
  ["编辑", "E"],
  ["视图", "V"],
  ["插入", "I"],
  ["格式", "O"],
  ["工具", "T"],
  ["绘图", "D"],
  ["标注", "N"],
  ["修改", "M"],
  ["扩展工具", "X"],
  ["窗口", "W"],
  ["帮助", "H"],
]

function TitleBar() {
  return (
    <header className="flex h-[21px] shrink-0 items-center bg-[#505050] pl-[3px] text-[#f2f2f2]">
      <svg viewBox="0 0 16 16" className="size-4 shrink-0" aria-hidden="true">
        <path d="M4 1h11.500v13L13 15.500H4z" fill="#2c7f9e" />
        <path d="M1 3l4 5-3 6M1 9l6-6M6 13V6l4 6V5l4 7" fill="none" stroke="#4fd08a" strokeWidth="1.300" />
        <path d="M7 3h7v9" fill="none" stroke="#9fdcf0" />
      </svg>
      <h1 className="ml-[5px] flex-1 truncate text-[12px] leading-[20px]">
        <span className="text-[14px]">中望</span>
        <span className="text-[13px]">CAD+ 2012 </span>
        <span className="text-[14px]">专业版</span> - [Drawing1.dwg]
      </h1>
      <div className="flex h-full items-stretch border-l border-[#333]">
        <button type="button" aria-label="最小化" className="flex w-[25px] items-center justify-center border-r border-[#333] bg-[#595959]">
          <span className="h-[3px] w-3 bg-white" />
        </button>
        <button type="button" aria-label="最大化" className="flex w-[25px] items-center justify-center border-r border-[#333] bg-[#595959]">
          <span className="h-[9px] w-[10px] border-[3px] border-white" />
        </button>
        <button type="button" aria-label="关闭" className="mr-[3px] flex w-[39px] items-center justify-center border-r border-[#333] bg-[#595959]">
          <svg viewBox="0 0 12 10" className="h-[10px] w-3" stroke="#fff" strokeWidth="2.600">
            <path d="M1.500.5l9 9M10.500.5l-9 9" />
          </svg>
        </button>
      </div>
    </header>
  )
}

function MenuBar() {
  return (
    <nav className="flex h-[19px] shrink-0 items-center bg-[#f1f1f1] pr-px pl-px">
      <DwgIcon />
      <div className="ml-[2px] flex flex-1 overflow-hidden">
        {menus.map(([name, key]) => (
          <button key={key} type="button" className="shrink-0 px-[5px] text-[12px] leading-[18px] whitespace-nowrap">
            {name}(<u>{key}</u>)
          </button>
        ))}
      </div>
      <div className="flex shrink-0 gap-1">
        <button type="button" aria-label="最小化文档" className="h-[17px] w-[15px] rounded-[3px] border border-[#b5b5b5] border-t-white bg-[#fbfbfb]">
          <svg viewBox="0 0 14 14" fill="none" stroke="#777" strokeWidth="1.500">
            <path d="M4 10.500h6" />
          </svg>
        </button>
        <button type="button" aria-label="还原文档" className="h-[17px] w-[15px] rounded-[3px] border border-[#b5b5b5] border-t-white bg-[#fbfbfb]">
          <svg viewBox="0 0 14 14" fill="none" stroke="#6b7686">
            <path d="M5.500 6V3.500h5v4H8.500M5 4h6M3.500 6.500h5v4h-5zM3 7h6" />
          </svg>
        </button>
        <button type="button" aria-label="关闭文档" className="h-[17px] w-[15px] rounded-[3px] border border-[#b5b5b5] border-t-white bg-[#fbfbfb]">
          <svg viewBox="0 0 14 14" fill="none" stroke="#777" strokeWidth="1.800">
            <path d="M4 4l6.500 6.500M10.500 4L4 10.500" />
          </svg>
        </button>
      </div>
    </nav>
  )
}

function DropCaret() {
  return (
    <button type="button" aria-label="历史" className="flex w-[11px] shrink-0 items-center justify-center">
      <svg viewBox="0 0 6 3" className="h-[3px] w-[6px]" fill="#9a9a9a">
        <path d="M0 0h6L3 3z" />
      </svg>
    </button>
  )
}

function ToolRows() {
  return (
    <div className="shrink-0">
      <div className="flex h-[27px] overflow-hidden pt-px">
        <Bar>
          <Tools names="new open save" />
          <Sep />
          <Tools names="print preview publish" />
          <Sep />
          <Tools names="cut copy paste match" />
          <Sep />
          <Tools names="undo" />
          <DropCaret />
          <Tools names="redo" />
          <DropCaret />
          <Sep />
          <Tools names="pan zoomRealtime zoomWindow zoomPrev" />
          <Sep />
          <Tools names="properties designCenter toolPalette" />
          <Sep />
          <Tools names="help" />
        </Bar>
        <Bar>
          <Tools names="textStyle" />
          <Combo label="文字样式" value="Standard" width="w-[95px]" />
          <Sep />
          <Tools names="dimStyle" />
          <Combo label="标注样式" value="ISO-25" width="w-[95px]" />
          <Sep />
          <Tools names="tableStyle" />
          <Combo label="表格样式" value="Standard" width="w-[95px]" />
        </Bar>
        <Bar>
          <Tools names="dimChainA dimChainB" />
          <Sep />
          <Tools names="dimChainC" />
        </Bar>
      </div>
      <div className="flex h-[27px] overflow-hidden pt-px">
        <Bar className="mr-[3px]">
          <Tools names="layerManager" />
          <Combo label="图层" value="0" width="w-[288px]" pad="pl-[81px]">
            <svg viewBox="0 0 76 16" className="ml-[2px] h-4 w-[76px]" fill="none">
              <circle cx="7" cy="6" r="4" fill="#ffd75a" stroke="#d89a2a" />
              <path d="M5 10.500h4v3H5z" fill="#8c96a8" />
              <path d="M23 1.500l1.500 2 2.500-1 .5 2.500 2.500.5L29 8l1 2.500-2.500.5-.5 2.500-2.500-1L23 14.500l-1.500-2-2.500 1-.5-2.500-2.500-.5L17 8l-1-2.500 2.500-.5.5-2.500 2.500 1z" fill="#f0a92e" stroke="#c9821f" strokeWidth=".7" />
              <circle cx="23" cy="8" r="4" fill="#ffd04f" />
              <path d="M33 6l4-3h10l-1.500 2.500H41L39 7z" fill="#8fb0ea" stroke="#5f80bd" />
              <path d="M41 5.500h5v5h-5zM39 8h9M43.500 10v2.500" fill="#5d86d8" stroke="#5f80bd" />
              <path d="M57 8V4.500c0-3 5-3 5 0V6" stroke="#d89a2a" strokeWidth="1.500" />
              <path d="M51.500 7.500h9v6h-9z" fill="#f2b233" stroke="#b97a1c" />
              <path d="M65.500 3.500h9v9h-9z" fill="#fff" stroke="#000" />
            </svg>
          </Combo>
          <Tools names="layerCurrent layerPrev layerState" />
        </Bar>
        <Bar>
          <Combo label="颜色" value="ByLayer" width="w-[143px]" pad="pl-[16px]">
            <span className="ml-[3px] size-[10px] border border-black" />
          </Combo>
          <Sep />
          <Combo label="线型" value="ByLayer" width="w-[152px]" pad="pl-[64px]">
            <span className="ml-[3px] h-px w-[57px] bg-black" />
          </Combo>
          <Sep />
          <Combo label="线宽" value="ByLayer" width="w-[119px]" pad="pl-[41px]">
            <span className="ml-[3px] h-px w-[34px] bg-black" />
          </Combo>
          <Sep />
          <Combo label="打印样式" value="ByColor" width="w-[115px]" pad="pl-[6px]" disabled />
        </Bar>
      </div>
      <div className="flex h-[27px] overflow-hidden pt-px">
        <Bar className="mr-[3px]">
          <Tools names="wire2d wire3d hidden flatShade gouraud flatEdge gouraudEdge" />
        </Bar>
        <Bar>
          <Tools names="box sphere cylinder cone wedge torus" />
          <Sep />
          <Tools names="extrude revolve" />
          <Sep />
          <Tools names="slice section interfere setup" />
        </Bar>
        <Bar>
          <Tools names="namedView" />
          <Sep />
          <Tools names="viewTop viewBottom viewLeft viewRight viewFront viewBack" />
          <Sep />
          <Tools names="isoSW isoSE isoNE isoNW" />
          <Sep />
          <Combo label="视图" value="" width="w-[134px]" disabled />
        </Bar>
        <Bar>
          <Tools names="union subtract intersect" />
          <Sep />
          <Tools names="extrude" />
        </Bar>
      </div>
    </div>
  )
}

function DrawingTabs() {
  return (
    <div className="flex h-6 shrink-0 items-end bg-linear-to-b from-[#cfe0fb] to-[#f6f9ff] pl-px">
      <button
        type="button"
        className="flex h-[23px] items-center gap-[6px] rounded-t-[3px] border border-b-0 border-[#4a4a4a] bg-linear-to-b from-[#fde3b8] to-[#f8bf72] pr-[10px] pl-[7px] text-[12px] font-bold"
      >
        <DwgIcon />
        Drawing1.dwg
      </button>
      <div className="ml-auto flex items-center gap-[7px] self-center pr-[6px]">
        <svg viewBox="0 0 5 8" className="h-2 w-[5px]" fill="none" stroke="#000">
          <path d="M4.500.8v6.400L1 4z" />
        </svg>
        <svg viewBox="0 0 5 8" className="h-2 w-[5px]" fill="none" stroke="#000">
          <path d="M.5.8v6.400L4 4z" />
        </svg>
        <svg viewBox="0 0 9 5" className="h-[5px] w-[9px]">
          <path d="M0 0h9L4.500 5z" />
        </svg>
      </div>
    </div>
  )
}

function ModelSpace() {
  return (
    <main className="relative min-w-0 flex-1 overflow-hidden bg-black">
      <svg viewBox="0 0 91 91" className="absolute top-[79px] left-[258px] size-[91px]" fill="none" stroke="#fff">
        <path d="M45.500 0v91M0 44.500h91M41.500 40.500h8v8h-8z" />
      </svg>
      <svg viewBox="0 0 97 98" className="absolute bottom-[9px] left-2 h-[98px] w-[97px]" fill="none" stroke="#fff">
        <path d="M4.500 85.500h8v8h-8zM8.500 85V20M5.500 29.500l3-9 3 9M13 89.500h65M68 86.500l9 3-9 3" />
        <g fill="#ccc" stroke="none" fontFamily="'Liberation Sans', sans-serif" fontSize="15">
          <text x="5" y="14">Y</text>
          <text x="83" y="95">X</text>
        </g>
      </svg>
    </main>
  )
}

function VerticalScroll() {
  return (
    <div className="flex w-4 shrink-0 flex-col items-center bg-[#efefef] py-px">
      <button type="button" aria-label="向上滚动" className="flex size-[15px] items-center justify-center border border-[#333] bg-[#8e8e8e]">
        <svg viewBox="0 0 8 5" className="h-[5px] w-2" fill="none" stroke="#ddd">
          <path d="M1 4l3-3 3 3" />
        </svg>
      </button>
      <div className="mt-[2px] flex h-[15px] w-[15px] flex-col justify-center gap-[2px] border border-[#333] bg-[#8e8e8e] px-[2px]">
        <div className="h-px bg-[#333]" />
        <div className="h-px bg-[#333]" />
        <div className="h-px bg-[#333]" />
      </div>
      <button type="button" aria-label="向下滚动" className="mt-auto flex size-[15px] items-center justify-center border border-[#333] bg-[#8e8e8e]">
        <svg viewBox="0 0 8 6" className="h-[6px] w-2" fill="#ddd">
          <path d="M1 0h6v1H1zM1 2h6L4 5z" />
        </svg>
      </button>
    </div>
  )
}

function LayoutTabs() {
  return (
    <div className="flex h-4 shrink-0 bg-[#efefef]">
      <svg viewBox="0 0 63 15" className="h-[15px] w-[63px] shrink-0" fill="#b3b3b3">
        <path d="M5 3h1v9H5zM11 3v9L7 7.500zM27 3v9l-4-4.500zM37 3v9l4-4.500zM52 3v9l4-4.500zM57 3h1v9h-1z" />
      </svg>
      <svg viewBox="0 0 10 15" className="h-[15px] w-[10px] shrink-0" stroke="#000">
        <path d="M1 0l7 14.500h2V0z" fill="#fff" stroke="none" />
        <path d="M1 0l7 14.500" />
      </svg>
      <button type="button" className="bg-white text-[12px] leading-[14px] font-medium">模型</button>
      <svg viewBox="0 0 14 15" className="h-[15px] w-[14px] shrink-0" stroke="#000">
        <path d="M0 0h11L4 14.500H0z" fill="#fff" stroke="none" />
        <path d="M11 0L4 14.500M7.500 7.500L11 14.500" />
      </svg>
      <button type="button" className="text-[12px] leading-[14px]">布局1</button>
      <svg viewBox="0 0 14 15" className="h-[15px] w-[14px] shrink-0" stroke="#000" fill="none">
        <path d="M3 0l7 14.500M6.500 7.500L3 14.500" />
      </svg>
      <button type="button" className="text-[12px] leading-[14px]">布局2</button>
      <svg viewBox="0 0 14 15" className="h-[15px] w-[14px] shrink-0" stroke="#000" fill="none">
        <path d="M10 0L3 14.500" />
      </svg>
      <div className="ml-auto flex h-[15px] w-[38%] max-w-[341px]">
        <div className="w-[4px] border-r border-[#8a8a8a]" />
        <button type="button" aria-label="向左滚动" className="flex w-4 items-center justify-center border-r-2 border-b border-[#777] bg-[#f2f2f2]">
          <svg viewBox="0 0 4 8" className="h-2 w-1">
            <path d="M4 0v8L0 4z" />
          </svg>
        </button>
        <div className="flex-1 bg-[#f6f6f6]" />
        <button type="button" aria-label="向右滚动" className="flex w-4 items-center justify-center border-r-2 border-b border-l border-[#777] bg-[#f2f2f2]">
          <svg viewBox="0 0 4 8" className="h-2 w-1">
            <path d="M0 0v8l4-4z" />
          </svg>
        </button>
      </div>
      <div className="w-4 shrink-0" />
    </div>
  )
}

function Workspace() {
  return (
    <div className="flex min-h-0 flex-1">
      <aside className="flex w-6 shrink-0 flex-col overflow-hidden border-r border-[#a3a3a3]">
        <HGrip />
        <Stack
          names="line xline polyline polygon rectangle arc circle cloud spline ellipse ellipseArc insert block point hatch region table mtext"
          height="h-[384px]"
        />
        <div className="mt-[5px] border-t border-[#a3a3a3]" />
        <HGrip />
        <Stack names="text textEdit" height="h-[43px]" />
      </aside>
      <aside className="ml-px flex w-[25px] shrink-0 flex-col overflow-hidden border-r border-[#a3a3a3]">
        <HGrip />
        <Stack
          names="erase copyObj mirror offset array move rotate scale stretch trim extend breakPoint breakTwo chamfer fillet explode"
          height="h-[341px]"
        />
        <div className="mt-[4px] border-t border-[#a3a3a3]" />
        <HGrip />
        <Stack names="order" height="h-[25px]" />
        <HSep />
        <Stack names="hatchEdit pedit splinedit" height="h-[60px]" />
      </aside>
      <section className="ml-px flex min-w-0 flex-1 flex-col pt-px">
        <DrawingTabs />
        <div className="flex min-h-0 flex-1">
          <ModelSpace />
          <VerticalScroll />
        </div>
        <LayoutTabs />
      </section>
      <aside className="flex w-[27px] shrink-0 flex-col overflow-hidden border-l-2 border-white">
        <HGrip />
        <Stack names="dimLinear dimAligned dimArc dimOrdinate" height="h-[86px]" />
        <HSep />
        <Stack names="dimRadius dimJogged dimDiameter dimAngular" height="h-[86px]" />
        <HSep />
        <Stack names="dimQuick dimBaseline dimContinue dimSpace" height="h-[83px]" />
        <HSep />
        <Stack names="leader tolerance centerMark inspect joggedLinear" height="h-[107px]" />
        <HSep />
        <Stack names="dimEdit dimOblique dimTextEdit" height="h-[62px]" />
      </aside>
    </div>
  )
}

function CommandLine() {
  return (
    <div className="flex h-8 shrink-0 border-t border-b border-[#a3a3a3] pt-[5px]">
      <div className="flex w-4 shrink-0 flex-col items-end gap-[6px] pt-[5px] pr-[3px]">
        <svg viewBox="0 0 7 6" className="h-[6px] w-[7px]" stroke="#222" strokeWidth="1.600">
          <path d="M1 .5l5 5M6 .5l-5 5" />
        </svg>
        <svg viewBox="0 0 7 4" className="h-1 w-[7px]" stroke="#aaa">
          <path d="M.5 0v4M5.500 0v4" />
        </svg>
      </div>
      <input
        aria-label="命令行"
        defaultValue="命令："
        className="min-w-0 flex-1 border-t-2 border-l-2 border-black bg-white pt-[8px] text-[14px] leading-[14px] outline-none"
      />
      <div className="w-[25px] shrink-0 border-r-2 border-[#cdd8ee]" />
    </div>
  )
}

const modes = ["snap", "grid", "ortho", "polar", "osnap", "otrack", "lineweight", "dynamic"]

function StatusBar() {
  return (
    <footer className="flex h-6 shrink-0 items-center pt-[3px] pl-1">
      <output className="h-[18px] w-[242px] shrink-0 border border-[#9a9a9a] font-['DejaVu_Sans_Mono',monospace] text-[10px] leading-[18px] whitespace-pre">
        {"357.5152,  359.3798, 0.0000"}
      </output>
      <div className="ml-[2px] flex gap-px">
        {modes.map((mode) => {
          const on = mode === "osnap" || mode === "dynamic"
          return (
            <button
              key={mode}
              type="button"
              aria-label={mode}
              aria-pressed={on}
              className={`flex h-[19px] w-[22px] items-center justify-center border ${
                on ? "border-t-2 border-t-black border-r-white border-b-white border-l-black" : "border-t-white border-r-[#a3a3a3] border-b-[#8a8a8a] border-l-white"
              }`}
            >
              <Icon name={mode} />
            </button>
          )
        })}
      </div>
      <div className="ml-auto flex items-center gap-[10px] pt-[6px] pr-px">
        <svg viewBox="0 0 8 4" className="h-1 w-2" fill="#1f7a2a">
          <path d="M0 0h8L4 4z" />
        </svg>
        <svg viewBox="0 0 9 9" className="size-[9px]" fill="#333">
          <path d="M6 0h2v2H6zM3 3h2v2H3zM6 3h2v2H6zM0 6h2v2H0zM3 6h2v2H3zM6 6h2v2H6z" />
        </svg>
      </div>
    </footer>
  )
}

function Watermark() {
  return (
    <div className="pointer-events-none absolute right-[44px] bottom-[18px] w-[190px]">
      <svg viewBox="0 0 190 90" className="w-full" fill="#fff" fillOpacity=".75" stroke="#cfcfcf" strokeWidth="1">
        <g fill="#bcbcbc" fillOpacity="1" stroke="none">
          <ellipse cx="69" cy="24" rx="6" ry="9" />
          <ellipse cx="82" cy="11" rx="6" ry="9" />
          <ellipse cx="97" cy="12" rx="6" ry="9" />
          <ellipse cx="107" cy="27" rx="6" ry="8" />
        </g>
        <path d="M88 25c8 0 12 9 19 16 8 9 2 18-7 17-8-1-16-1-24 0-9 1-15-8-8-17 7-7 12-16 20-16z" fillOpacity="1" />
        <g fontFamily="'Liberation Sans', sans-serif" fontWeight="bold">
          <text x="1" y="56" fontSize="38">Bai</text>
          <text x="72" y="53" fontSize="26">du</text>
          <text x="115" y="54" fontSize="31" fontFamily="'Noto Sans CJK SC', sans-serif">经验</text>
        </g>
        <text x="2" y="80" fontSize="21" fontFamily="'Liberation Sans', sans-serif" strokeWidth=".8">jingyan.baidu.com</text>
      </svg>
    </div>
  )
}

export default function App() {
  return (
    <div className="relative h-screen min-h-[400px] overflow-hidden bg-[linear-gradient(to_bottom,#0b57b7_0%,#0b6cc8_14%,#149add_26%,#3fc4e8_38%,#8fe0f4_55%,#b4ecf7_72%,#86d8f0_90%,#6fd0f3_100%),linear-gradient(to_right,#0a58bd,#0a4eae_50%,#05489b),linear-gradient(to_right,#58c6f4,#2aa5f2_30%,#0f7be8_60%,#0450b4_85%,#03439a)] bg-[length:11px_100%,100%_8px,100%_100%] bg-no-repeat pt-2 pr-[9px] pb-2 pl-[11px] font-['Noto_Sans','Noto_Sans_CJK_SC',sans-serif] text-black">
      <div className="absolute inset-y-0 right-0 w-[9px] bg-linear-to-b from-[#05489b] to-[#03439a]" />
      <svg className="absolute size-0" aria-hidden="true">
        <defs>
          <linearGradient id="face" x1="0" y1="0" x2="1" y2="1">
            <stop offset="0" stopColor="#f4f8fe" />
            <stop offset="1" stopColor="#a9c5f3" />
          </linearGradient>
          <linearGradient id="deep" x1="0" y1="0" x2="1" y2="1">
            <stop offset="0" stopColor="#b3cbf4" />
            <stop offset="1" stopColor="#6b92de" />
          </linearGradient>
          <radialGradient id="ball" cx=".35" cy=".3" r=".8">
            <stop offset="0" stopColor="#d3e2fb" />
            <stop offset="1" stopColor="#7299e2" />
          </radialGradient>
        </defs>
      </svg>
      <div className="flex h-full flex-col border-[3px] border-[#3f454b] bg-[#efefef]">
        <TitleBar />
        <MenuBar />
        <ToolRows />
        <Workspace />
        <CommandLine />
        <StatusBar />
      </div>
      <Watermark />
    </div>
  )
}
